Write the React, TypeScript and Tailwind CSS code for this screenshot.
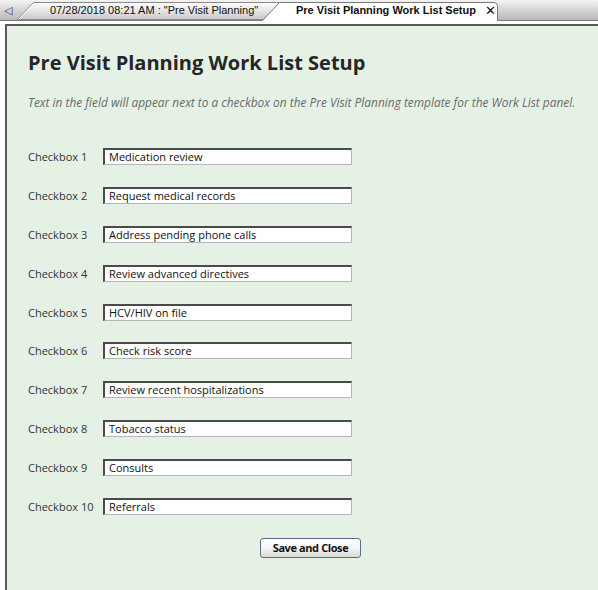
const items = [
  "Medication review",
  "Request medical records",
  "Address pending phone calls",
  "Review advanced directives",
  "HCV/HIV on file",
  "Check risk score",
  "Review recent hospitalizations",
  "Tobacco status",
  "Consults",
  "Referrals",
];

function TabStrip() {
  return (
    <div className="flex items-end h-[21px] bg-gradient-to-b from-[#f4f4f4] to-[#b8b8b8] border-b border-[#7a7a7a] font-['Liberation_Sans',sans-serif]">
      <span className="w-[17px] self-center pl-[4px] text-[11px] leading-none text-[#333]">◁</span>
      {/* inactive tab */}
      <div className="relative h-[19px] w-[270px] shrink-0">
        <svg className="absolute inset-0" width="270" height="19" viewBox="0 0 270 19">
          <defs>
            <linearGradient id="inact" x1="0" y1="0" x2="0" y2="1">
              <stop offset="0" stopColor="#ffffff" />
              <stop offset="1" stopColor="#c9c9c9" />
            </linearGradient>
          </defs>
          <path d="M0.5 18.5 L16.5 1.5 L268 1.5 L268 18.5 Z" fill="url(#inact)" stroke="#8a8a8a" />
          <path d="M1.5 18.5 L17 2.5 L267 2.5" fill="none" stroke="#ffffff" />
        </svg>
        <span className="relative block pl-[33px] pt-[2px] text-[11px] leading-[15px] text-[#111] whitespace-nowrap">
          07/28/2018 08:21 AM : "Pre Visit Planning"
        </span>
      </div>
      {/* active tab */}
      <div className="relative -ml-[25px] -mb-px h-[21px] w-[236px] shrink-0">
        <svg className="absolute inset-0" width="236" height="21" viewBox="0 0 236 21">
          <path d="M0.5 20.5 L17.5 2.5 L232 2.5 Q235.5 2.5 235.5 6 L235.5 20.5" fill="#ffffff" stroke="#7a7a7a" />
          <rect x="1" y="20" width="234" height="1" fill="#ffffff" />
        </svg>
        <div className="relative flex items-center gap-[9px] pl-[34px] pt-[3px]">
          <span className="text-[11px] font-bold leading-[15px] text-[#111] whitespace-nowrap">
            Pre Visit Planning Work List Setup
          </span>
          <span className="text-[13px] leading-[14px] text-[#111]">✕</span>
        </div>
      </div>
    </div>
  );
}

export default function App() {
  return (
    <div className="w-[598px] h-[590px] overflow-hidden bg-white font-['Open_Sans',sans-serif] text-[#333]">
      <TabStrip />
      <div className="h-[3px] bg-white" />
      <div className="ml-[5px] h-[566px] border-l-2 border-t-2 border-[#5a5a5a] bg-[#e6f1e6] pl-[21px]">
        <h1 className="mt-[23px] text-[20px] font-bold leading-[28px] text-[#262626]">
          Pre Visit Planning Work List Setup
        </h1>
        <p className="mt-[17px] text-[11.9px] italic leading-[16px] text-[#6a6a6a] whitespace-nowrap">
          Text in the field will appear next to a checkbox on the Pre Visit Planning template for the Work List panel.
        </p>
        <div className="mt-[38px] flex flex-col gap-y-[21.9px]">
          {items.map((v, i) => (
            <div key={i} className="flex items-center h-[17px]">
              <span className="w-[75px] text-[11px] leading-[17px] text-[#333]">Checkbox {i + 1}</span>
              <div className="w-[249px] h-[17px] bg-white border-t-2 border-l-2 border-t-[#4a4a4a] border-l-[#4a4a4a] border-r border-b border-r-[#b5b5b5] border-b-[#b5b5b5] pl-[4px] text-[11px] leading-[14px] text-[#111] whitespace-nowrap">
                {v}
              </div>
            </div>
          ))}
        </div>
        <div className="mt-[19px] pl-[232px]">
          <button className="w-[101px] h-[20px] rounded-[3px] border border-[#5b6f86] bg-gradient-to-b from-white via-[#f6f6f6] to-[#d8d8d8] text-[11px] font-bold leading-[16px] tracking-[-0.4px] text-[#111]">
            Save and Close
          </button>
        </div>
      </div>
    </div>
  );
}
